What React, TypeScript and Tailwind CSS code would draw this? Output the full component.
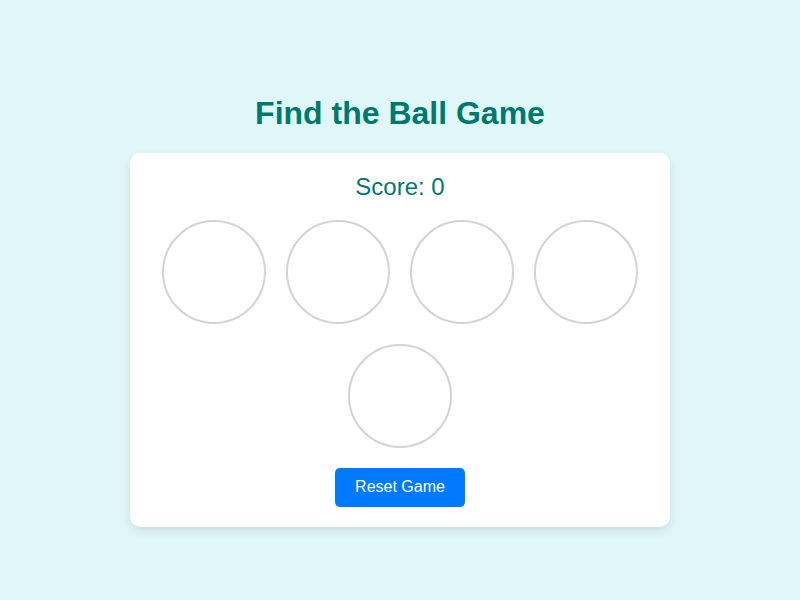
export default function App() {
  const cups = [0, 1, 2, 3, 4]

  return (
    <div className="flex min-h-screen flex-col items-center justify-center bg-[#e0f7fa] font-['Liberation_Sans',Arial,sans-serif]">
      <h1 className="my-[21.44px] text-[32px] font-bold leading-[1.15] text-[#00796b]">
        Find the Ball Game
      </h1>

      <div className="w-[540px] rounded-[10px] bg-white p-5 text-center shadow-[0_4px_8px_rgba(0,0,0,0.1)]">
        <div className="text-[24px] leading-[1.15] text-[#00796b]">Score: 0</div>

        {/* cups */}
        <div className="mt-[10px] flex flex-wrap justify-center">
          {cups.map((i) => (
            <div
              key={i}
              className="m-[10px] h-[104px] w-[104px] rounded-full border-2 border-[#d3d3d3] bg-white"
            />
          ))}
        </div>

        <button className="mt-[10px] rounded-[5px] bg-[#007bff] px-5 py-[10px] text-[16px] leading-[1.15] text-white">
          Reset Game
        </button>
      </div>
    </div>
  )
}
